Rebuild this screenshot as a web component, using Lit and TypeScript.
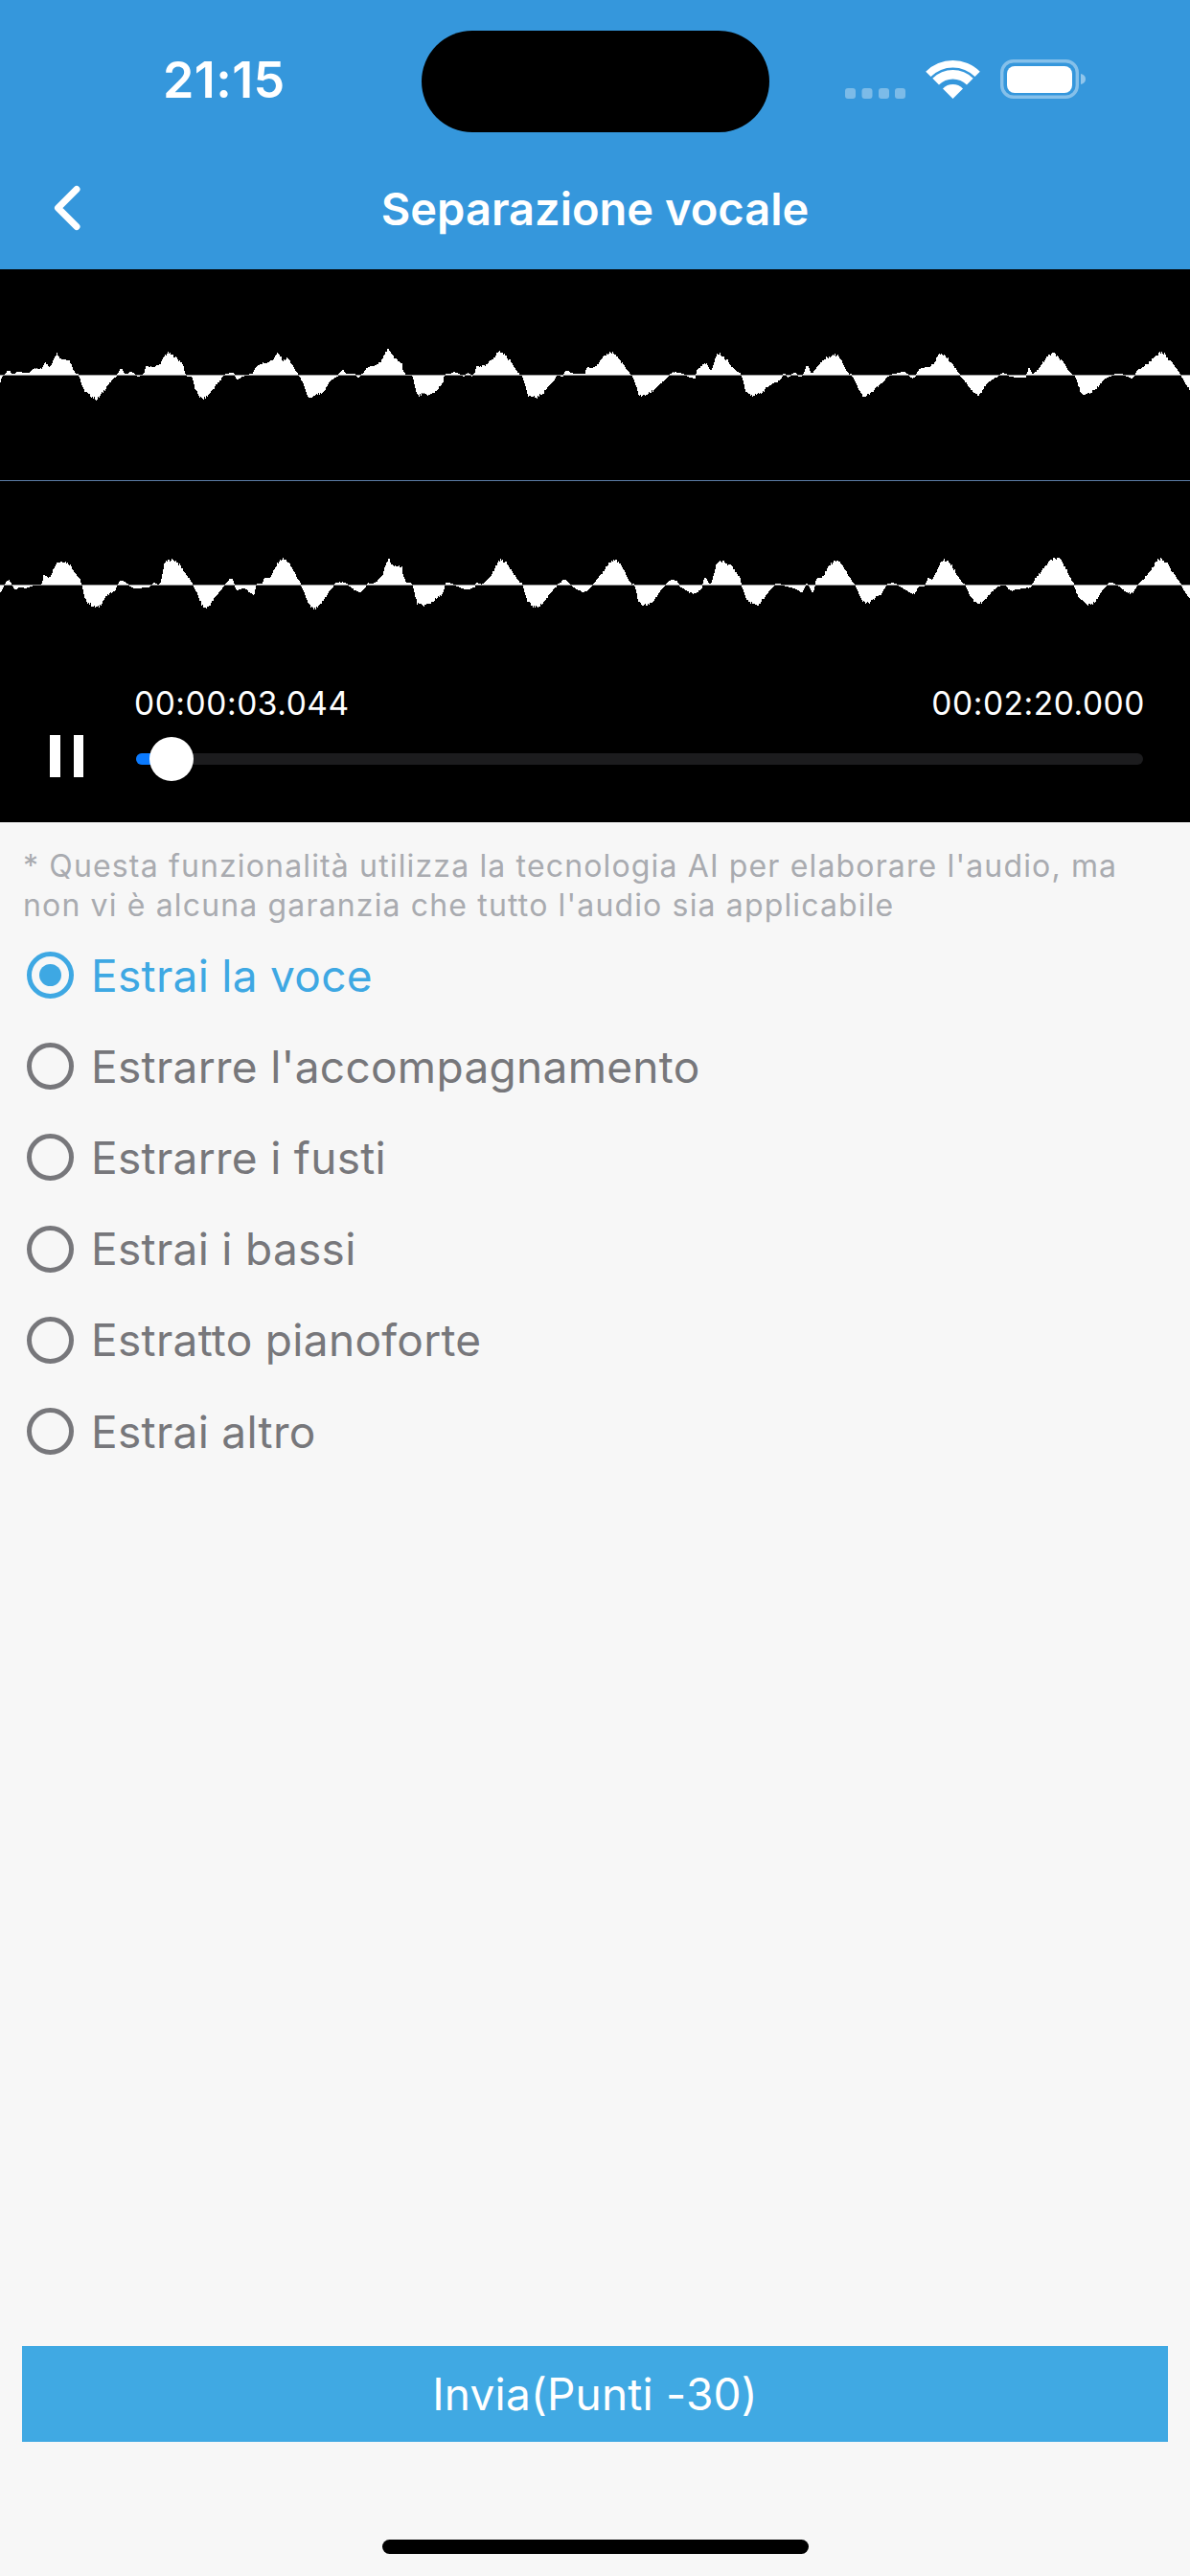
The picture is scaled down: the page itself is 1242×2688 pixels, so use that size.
import { LitElement, html, css, svg } from "lit";
import { customElement } from "lit/decorators.js";

type P = number[];
const topA: P = [0,-20,5,-3,10,0,25,12,40,2,55,10,85,5,105,18,130,20,140,40,155,25,175,66,190,50,215,45,235,5,245,0,260,-45,295,-70,305,-70,345,-20,365,0,378,20,390,3,410,8,430,-2,450,5,455,25,480,25,500,35,520,65,540,60,570,35,580,0,600,-5,610,-45,635,-72,690,-15,700,0,730,5,740,-12,760,-2,790,5,800,25,820,35,850,45,870,65,885,45,900,50,930,5,940,-10,965,-68,990,-60,1010,-55,1030,-20,1055,-3,1070,14,1085,3,1110,3,1120,-5,1135,5,1145,20,1170,30,1190,40,1213,78,1235,50,1259,35];
const topB: P = [0,15,10,0,30,-3,45,-60,60,-58,90,-58,125,-25,130,0,150,3,160,8,190,-2,205,5,215,-2,225,5,230,25,260,30,290,60,303,72,330,50,365,3,375,-5,390,-58,425,-65,475,-15,485,0,500,-3,510,12,530,5,570,3,575,22,600,25,650,70,685,40,710,5,720,-5,740,-60,770,-55,820,-15,835,0,850,8,880,2,915,-8,920,15,950,35,965,15,985,65,1020,40,1040,15,1060,0,1075,-50,1110,-60,1150,-30,1180,-15,1195,5,1205,-5,1225,5];
const topC: P = [0,5,10,-3,25,3,35,30,50,5,70,30,100,55,135,58,165,5,175,0,195,-35,215,-65,270,-25,290,-3,310,3,340,8,370,-8,385,15,410,25,425,30,455,65,490,35,515,0,530,-20,570,-60,600,-25,630,-5,650,5,670,-3,720,-5,730,20,745,5,800,65,830,45,865,3,875,-5,895,-55,930,-50,970,-10,1010,3,1040,-3,1055,-8,1070,15,1095,30,1145,68,1185,30,1205,0,1236,-45];
const botA: P = [0,-20,20,10,30,10,45,-12,60,-5,80,-8,105,0,130,3,135,28,155,25,175,68,215,65,250,15,255,0,265,-45,305,-68,330,-35,360,-15,365,0,378,12,395,5,415,-8,440,-8,465,-5,480,5,500,5,515,68,550,72,595,15,605,-5,640,-70,695,-10,700,0,725,18,740,-15,760,-8,795,-28,800,0,820,3,825,20,845,25,875,75,900,70,940,5,950,-20,965,-60,990,-70,1040,-8,1050,5,1080,5,1120,-20,1140,-10,1150,5,1165,3,1195,28,1215,80,1225,60,1259,55];
const botB: P = [0,30,10,8,30,0,45,-55,80,-58,125,-25,135,5,150,3,200,-12,225,-5,230,5,250,3,280,35,303,75,330,60,365,10,375,0,390,-50,425,-65,480,-5,490,3,505,15,530,-3,565,-20,590,-3,620,30,650,70,675,70,715,5,725,0,740,-55,775,-55,820,-3,850,15,870,-5,910,-25,935,-10,945,20,965,5,985,70,1025,60,1055,25,1060,0,1075,-40,1110,-60,1160,-5,1175,3,1200,-3,1225,-8];
const botC: P = [0,-10,20,-20,35,3,55,-20,65,18,85,25,100,55,135,75,175,15,185,0,215,-55,270,-25,285,0,310,3,370,-25,385,-5,405,0,415,20,430,20,455,70,480,70,520,10,530,0,550,-40,580,-55,625,-10,655,0,670,-15,720,-8,735,-5,750,20,800,75,830,75,870,5,885,-35,925,-60,975,0,1005,0,1050,-25,1070,0,1095,25,1145,80,1205,5,1236,-40];

/** Turns three zoom-panel outlines (3x coordinates) into per-pixel columns around a baseline. */
function wavePath(panels: [P, number][], base: number, seed: number): string {
  const pts: [number, number][] = [];
  for (const [p, off] of panels) {
    for (let i = 0; i < p.length; i += 2) pts.push([off + p[i] / 3, p[i + 1] / 3]);
  }
  let d = "";
  let k = 0;
  for (let x = 0; x < 1242; x++) {
    while (k < pts.length - 2 && pts[k + 1][0] <= x) k++;
    const [x0, h0] = pts[k];
    const [x1, h1] = pts[k + 1];
    const hm = k > 0 ? pts[k - 1][1] : h0;
    const hp = k < pts.length - 2 ? pts[k + 2][1] : h1;
    const t = Math.min(1, Math.max(0, (x - x0) / Math.max(1, x1 - x0)));
    // Catmull-Rom, so the lobes come out dome-shaped rather than triangular
    const cr =
      0.5 *
      (2 * h0 +
        (h1 - hm) * t +
        (2 * hm - 5 * h0 + 4 * h1 - hp) * t * t +
        (3 * h0 - hm - 3 * h1 + hp) * t * t * t);
    const lo = Math.min(h0, h1) - 2;
    const hi = Math.max(h0, h1) + 2;
    let h = Math.max(lo, Math.min(hi, cr));
    const n = Math.sin((x + seed) * 12.9898) * 43758.5453;
    const jitter = (n - Math.floor(n) - 0.5) * Math.min(3, Math.abs(h) * 0.2);
    h = Math.round(h + jitter);
    if (h > 0) d += `M${x} ${base - h}h1v${h}h-1z`;
    else if (h < 0) d += `M${x} ${base + 1}h1v${-h}h-1z`;
  }
  return d;
}

const topPath = wavePath([[topA, 0], [topB, 420], [topC, 830]], 391, 3);
const botPath = wavePath([[botA, 0], [botB, 420], [botC, 830]], 610, 7);

const OPTIONS = [
  "Estrai la voce",
  "Estrarre l'accompagnamento",
  "Estrarre i fusti",
  "Estrai i bassi",
  "Estratto pianoforte",
  "Estrai altro",
];

@customElement("app-root")
export class AppRoot extends LitElement {
  static styles = css`
    :host {
      display: block;
      width: 1242px;
      height: 2688px;
      background: #f7f7f7;
      font-family: "Inter", "Liberation Sans", sans-serif;
      position: relative;
      overflow: hidden;
    }
    .page {
      display: flex;
      flex-direction: column;
      height: 2688px;
    }
    .header {
      height: 281px;
      flex: none;
      background: #3597dc;
      display: flex;
      flex-direction: column;
      color: #fff;
    }
    .status {
      height: 168px;
      display: flex;
      align-items: flex-start;
      position: relative;
    }
    .time {
      margin: 60px 0 0 170px;
      font-size: 52px;
      line-height: 48px;
      font-weight: 600;
      letter-spacing: 0.4px;
    }
    .island {
      position: absolute;
      left: 440px;
      top: 32px;
      width: 363px;
      height: 106px;
      border-radius: 53px;
      background: #000;
    }
    .status-icons {
      position: absolute;
      left: 880px;
      top: 62px;
    }
    .nav {
      flex: 1;
      display: flex;
      align-items: center;
      justify-content: center;
      position: relative;
      padding-bottom: 14px;
    }
    .nav .back {
      position: absolute;
      left: 54px;
      top: 24px;
    }
    .title {
      font-size: 47px;
      font-weight: 600;
    }
    .player {
      flex: none;
      height: 577px;
      background: #000;
      display: flex;
      flex-direction: column;
      position: relative;
    }
    .wave {
      display: block;
      position: absolute;
      left: 0;
      top: 0;
    }
    .controls {
      margin-top: auto;
      height: 147px;
      display: grid;
      grid-template-columns: 142px 1fr;
      padding-right: 49px;
      position: relative;
      color: #fff;
    }
    .pause {
      display: flex;
      gap: 14px;
      padding: 56px 0 0 52px;
    }
    .pause i {
      display: block;
      width: 10.5px;
      height: 44px;
      background: #fff;
    }
    .track-col {
      display: flex;
      flex-direction: column;
      padding-top: 3px;
    }
    .times {
      display: flex;
      justify-content: space-between;
      margin: 0 -2px;
      font-size: 33.5px;
      line-height: 40px;
      letter-spacing: 0.55px;
      font-weight: 400;
    }
    .track {
      margin-top: 32px;
      height: 12px;
      border-radius: 6px;
      background: #1c1c1e;
      position: relative;
    }
    .fill {
      position: absolute;
      left: 0;
      top: 0;
      height: 12px;
      width: 30px;
      border-radius: 6px;
      background: #0a7aff;
    }
    .thumb {
      position: absolute;
      left: 14px;
      top: -17px;
      width: 46px;
      height: 46px;
      border-radius: 50%;
      background: #fff;
    }
    .content {
      flex: 1;
      display: flex;
      flex-direction: column;
      padding: 0 24px;
    }
    .note {
      margin: 25px 0 0;
      font-size: 32px;
      line-height: 41px;
      letter-spacing: 1.15px;
      color: #a9abb0;
    }
    .options {
      display: flex;
      flex-direction: column;
      margin-top: 5px;
    }
    .option {
      height: 95.2px;
      display: flex;
      align-items: center;
      gap: 18px;
      font-size: 46px;
      letter-spacing: 0.3px;
      color: #77777b;
      padding-left: 4px;
    }
    .option.on {
      color: #3ea8e3;
    }
    .radio {
      flex: none;
      box-sizing: border-box;
      width: 49px;
      height: 49px;
      border-radius: 50%;
      border: 5px solid #77777b;
      display: flex;
      align-items: center;
      justify-content: center;
    }
    .option.on .radio {
      border-color: #3ea8e3;
    }
    .option.on .radio::after {
      content: "";
      width: 23px;
      height: 23px;
      border-radius: 50%;
      background: #3ea8e3;
    }
    .submit {
      margin: auto -1px 140px;
      height: 100px;
      display: flex;
      align-items: center;
      justify-content: center;
      background: #40a9e3;
      color: #fff;
      font-size: 46px;
      letter-spacing: 0.2px;
    }
    .home {
      position: absolute;
      left: 399px;
      top: 2650px;
      width: 445px;
      height: 15px;
      border-radius: 7.5px;
      background: #000;
    }
  `;

  render() {
    return html`
      <div class="page">
        <header class="header">
          <div class="status">
            <span class="time">21:15</span>
            <div class="island"></div>
            <svg class="status-icons" width="260" height="44" viewBox="0 0 260 44">
              <g fill="#fff" opacity="0.35">
                <rect x="2" y="30" width="11" height="11" rx="3"></rect>
                <rect x="19.5" y="30" width="11" height="11" rx="3"></rect>
                <rect x="37" y="30" width="11" height="11" rx="3"></rect>
                <rect x="54" y="30" width="11" height="11" rx="3"></rect>
              </g>
              <g fill="#fff">
                <path d="M86.2 12.7A40 40 0 0 1 142.8 12.7L137.5 18A32.5 32.5 0 0 0 91.5 18Z"></path>
                <path d="M93.3 19.8A30 30 0 0 1 135.7 19.8L129 26.5A20.5 20.5 0 0 0 100 26.5Z"></path>
                <path d="M104 30.4A15 15 0 0 1 125 30.4L114.5 41Z"></path>
              </g>
              <rect x="165.7" y="1.7" width="78.6" height="37.6" rx="12" fill="none" stroke="#fff" stroke-opacity="0.4" stroke-width="3.4"></rect>
              <rect x="171" y="7" width="68" height="28" rx="8" fill="#fff"></rect>
              <path d="M248 15c3.4 .8 5 2.8 5 5.5s-1.6 4.7-5 5.5z" fill="#fff" fill-opacity="0.45"></path>
            </svg>
          </div>
          <div class="nav">
            <svg class="back" width="32" height="50" viewBox="0 0 32 50">
              <path d="M26 5.5 6.5 25 26 44.5" fill="none" stroke="#fff" stroke-width="7" stroke-linecap="round" stroke-linejoin="round"></path>
            </svg>
            <span class="title">Separazione vocale</span>
          </div>
        </header>

        <section class="player">
          <svg class="wave" width="1242" height="440" viewBox="0 281 1242 440">
            ${svg`
              <rect x="0" y="391" width="1242" height="1" fill="#999"></rect>
              <rect x="0" y="610" width="1242" height="1" fill="#999"></rect>
              <rect x="0" y="501" width="1242" height="1" fill="#5b7ba5"></rect>
              <path d=${topPath} fill="#fff" shape-rendering="crispEdges"></path>
              <path d=${botPath} fill="#fff" shape-rendering="crispEdges"></path>
            `}
          </svg>
          <div class="controls">
            <div class="pause"><i></i><i></i></div>
            <div class="track-col">
              <div class="times"><span>00:00:03.044</span><span>00:02:20.000</span></div>
              <div class="track">
                <div class="fill"></div>
                <div class="thumb"></div>
              </div>
            </div>
          </div>
        </section>

        <main class="content">
          <p class="note">* Questa funzionalità utilizza la tecnologia AI per elaborare l'audio, ma non vi è alcuna garanzia che tutto l'audio sia applicabile</p>
          <div class="options">
            ${OPTIONS.map(
              (o, i) => html`<div class="option ${i === 0 ? "on" : ""}"><span class="radio"></span><span>${o}</span></div>`
            )}
          </div>
          <div class="submit">Invia(Punti -30)</div>
        </main>
      </div>
      <div class="home"></div>
    `;
  }
}
